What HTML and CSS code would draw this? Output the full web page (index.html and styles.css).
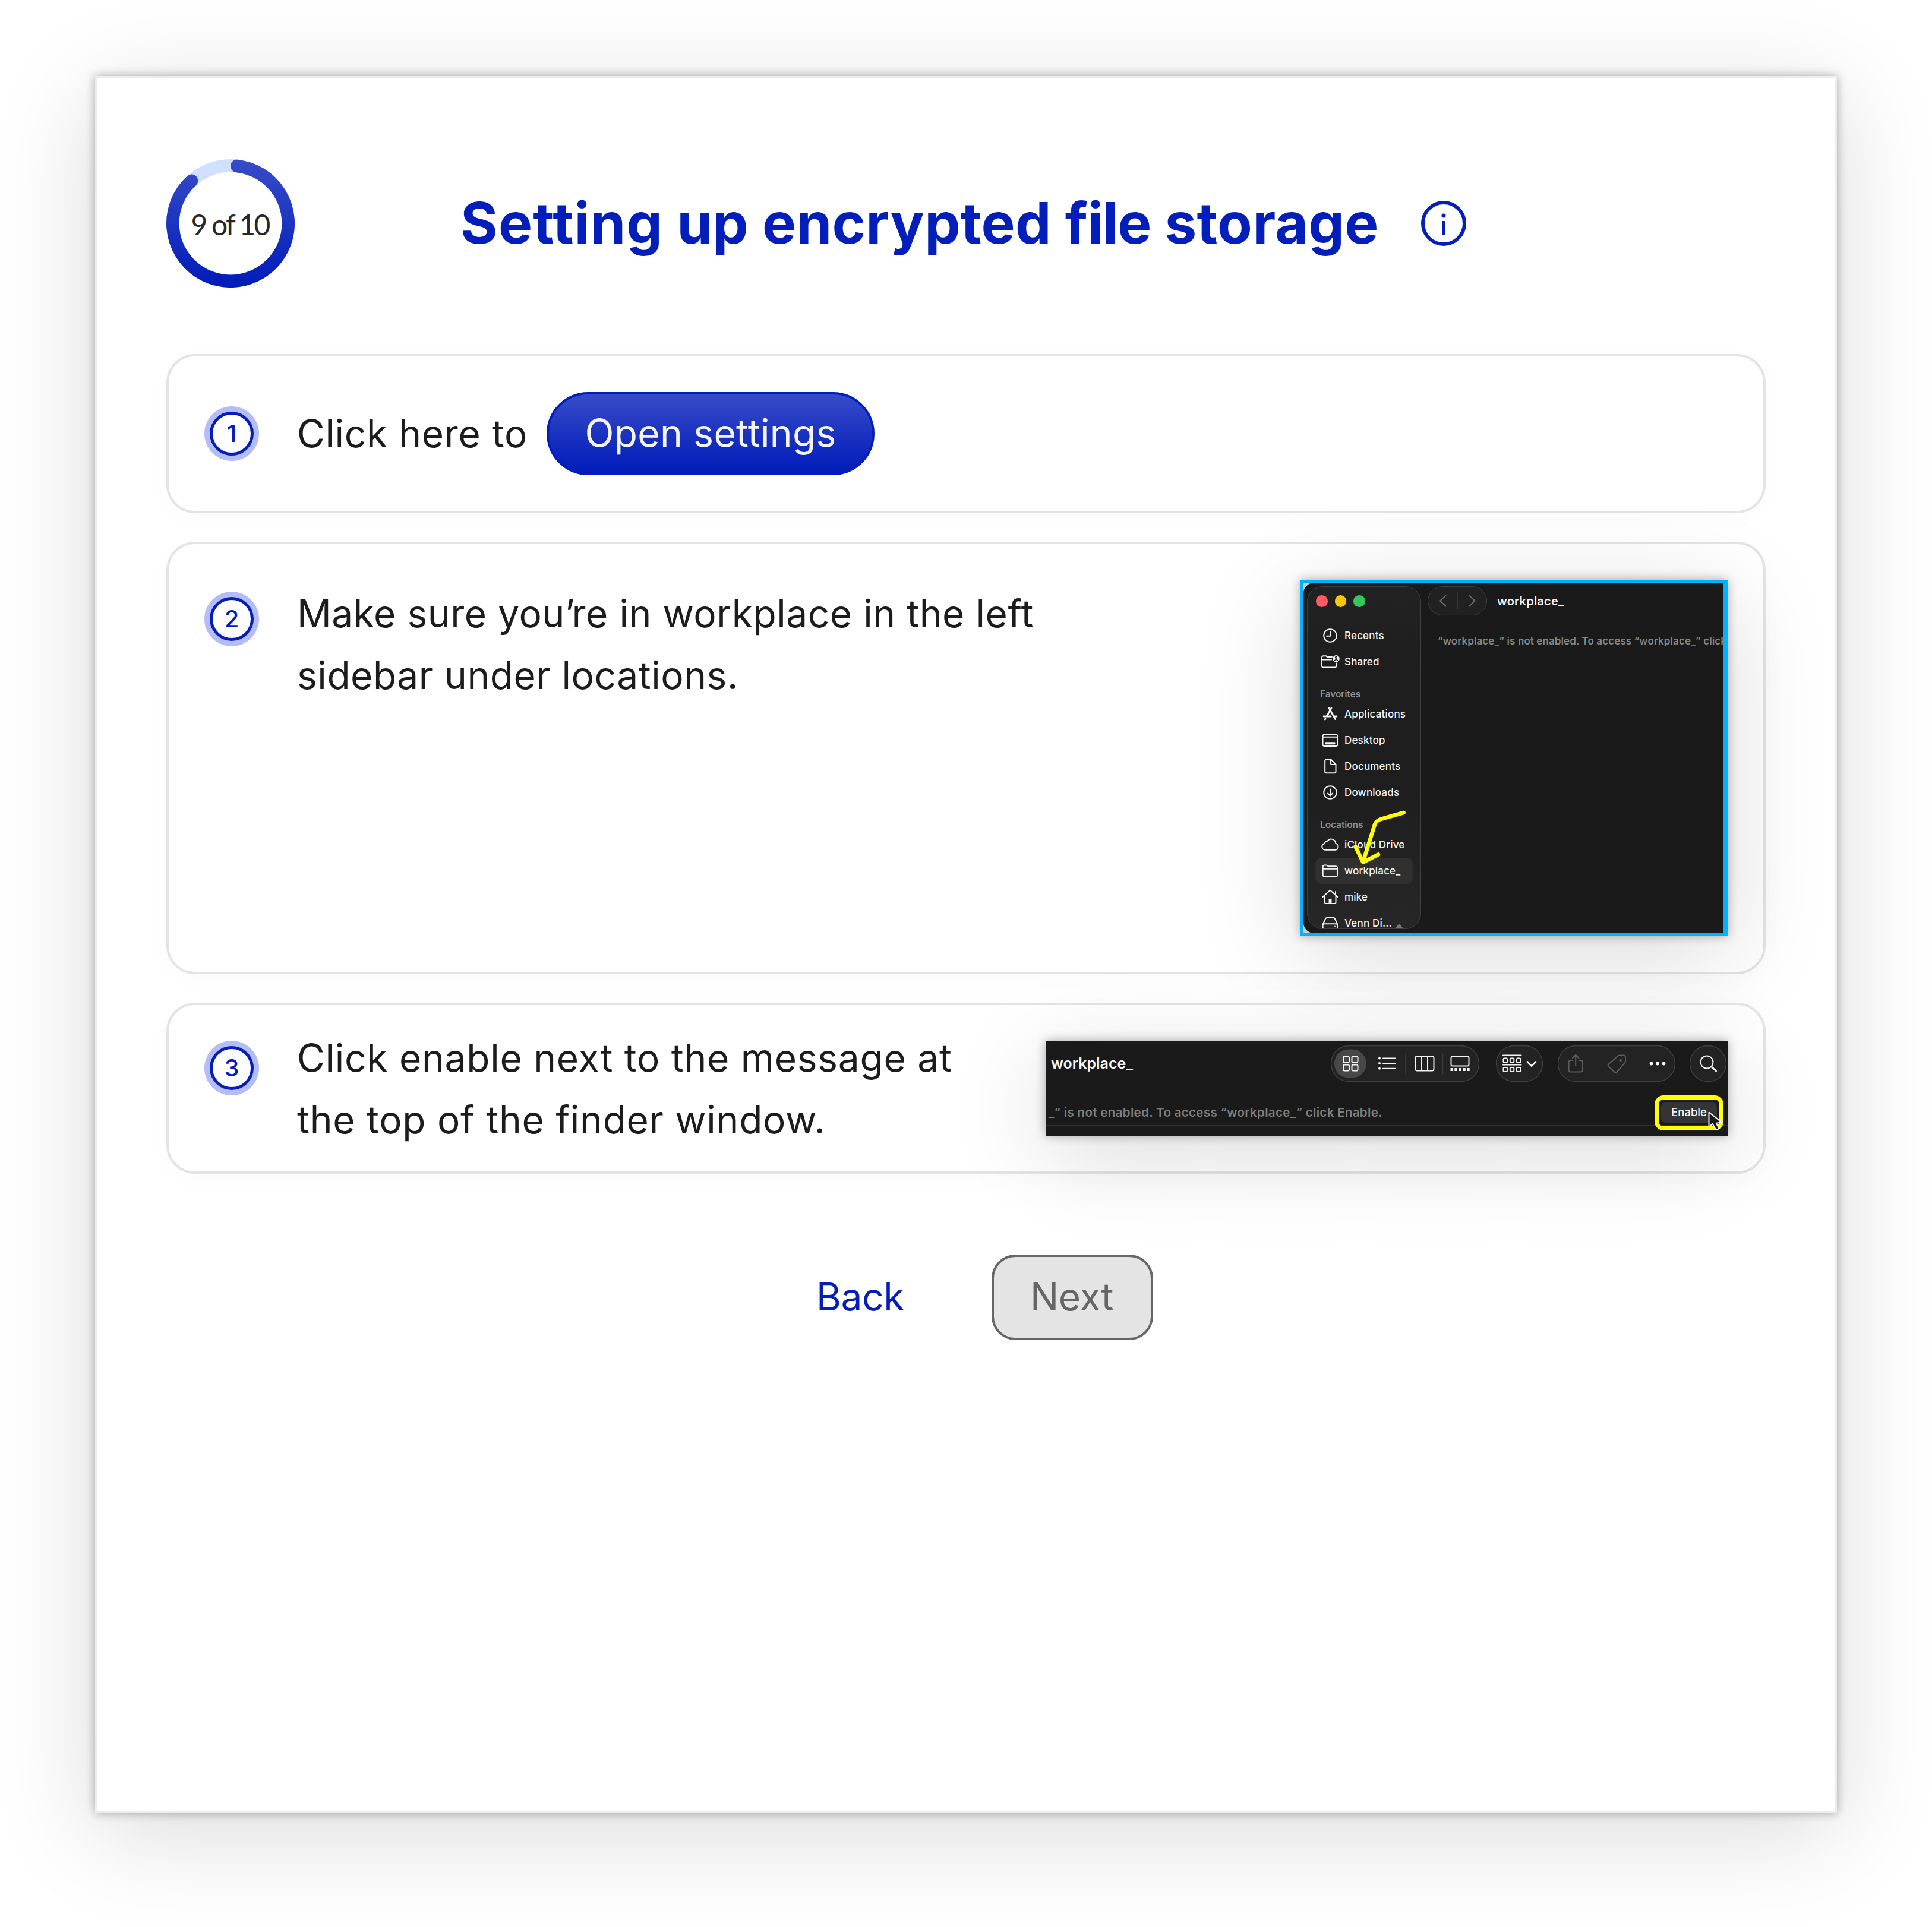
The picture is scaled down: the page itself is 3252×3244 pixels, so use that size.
FILE: index.html
```html
<!DOCTYPE html>
<html lang="en">
<head>
  <meta charset="UTF-8">
  <meta name="viewport" content="width=device-width, initial-scale=1.0">
  <title>Setting up encrypted file storage</title>
  <link rel="stylesheet" href="styles.css">
</head>
<body>
  <main class="dialog">
    <header class="header">
      <div class="progress">
        <svg viewBox="0 0 216 216" fill="none" stroke-width="21.6">
          <defs>
            <linearGradient id="ring" gradientUnits="userSpaceOnUse" x1="108" y1="0" x2="108" y2="216">
              <stop offset="0" stop-color="#384cc9"/>
              <stop offset="1" stop-color="#001bb9"/>
            </linearGradient>
          </defs>
          <circle cx="108" cy="108" r="97.2" stroke="#d0e1ff"/>
          <path d="M118.8 11.4A97.2 97.2 0 1 1 42.5 36.2" stroke="url(#ring)" stroke-linecap="round"/>
        </svg>
        <span class="progress-label">9 of 10</span>
      </div>
      <h1><span class="wide">Setting</span> up encrypted <span class="tight">file</span> storage</h1>
      <svg class="info" viewBox="0 0 76 76">
        <circle cx="38" cy="38" r="35" fill="none" stroke="#041ebb" stroke-width="6"/>
        <circle cx="38" cy="25" r="3.6" fill="#041ebb"/>
        <path d="M38 34v23" stroke="#041ebb" stroke-width="5.4"/>
      </svg>
    </header>

    <ol class="steps">
      <li class="step step-open">
        <span class="badge">1</span>
        <p>Click here to</p>
        <button class="btn-open">Open settings</button>
      </li>

      <li class="step step-sidebar">
        <span class="badge">2</span>
        <p>Make sure you<span class="quote">’</span>re in workplace in the left<br>sidebar under locations.</p>
        <div class="shot finder">
          <div class="window">
            <nav class="sidebar">
              <div class="lights"><i class="red"></i><i class="yellow"></i><i class="green"></i></div>
              <div class="item">
                <svg viewBox="-16 -16 32 32"><circle r="10.8"/><path d="M0-6.5V.8H-6"/></svg>
                Recents
              </div>
              <div class="item">
                <svg viewBox="-16 -16 32 32"><path d="M3-8H-5l-2-1.700h-4.500a2.500 2.500 0 0 0-2.500 2.500V7a2.500 2.500 0 0 0 2.500 2.500H8A2.500 2.500 0 0 0 10.500 7V2.500M-14-3.500H2"/><circle class="solid" cx="10" cy="-5.200" r="5.800"/><path class="cut" d="M10-8.500a1.400 1.400 0 0 1 0 2.800a1.400 1.400 0 0 1 0-2.800M7.300-2.200q2.700-2.600 5.400 0"/></svg>
                Shared
              </div>
              <div class="group">Favorites</div>
              <div class="item">
                <svg class="thick" viewBox="-16 -16 32 32"><path d="M-2-10L8.500 8.500M2-10L-5.500 3.500M-8 8L-8.800 9.200M-11 4H1M6 4h5"/></svg>
                Applications
              </div>
              <div class="item">
                <svg viewBox="-16 -16 32 32"><rect x="-12.500" y="-9.500" width="25" height="19.500" rx="3"/><path d="M-12.500-5.300h25"/><rect class="solid" x="-8.500" y="3.200" width="17" height="4" rx="1"/></svg>
                Desktop
              </div>
              <div class="item">
                <svg viewBox="-16 -16 32 32"><path d="M1.500-11.300H-6.500A2.300 2.300 0 0 0-8.800-9V9A2.300 2.300 0 0 0-6.500 11.300H7.200A2.300 2.300 0 0 0 9.500 9V-3.200ZM1-11V-5a2 2 0 0 0 2 2H9"/></svg>
                Documents
              </div>
              <div class="item">
                <svg viewBox="-16 -16 32 32"><circle r="10.800"/><path d="M0-5.500V5M-4 1.500L0 5.500L4 1.500"/></svg>
                Downloads
              </div>
              <div class="group">Locations</div>
              <div class="item">
                <svg viewBox="-16 -16 32 32"><path d="M-8.500 8.800a5.400 5.400 0 0 1-.8-10.700a5 5 0 0 1 4.800-4.300A7.600 7.600 0 0 1 9.300-2.200A5.600 5.600 0 0 1 8.500 8.800Z"/></svg>
                iCloud Drive
              </div>
              <div class="item selected">
                <svg viewBox="-16 -16 32 32"><path d="M-9.800-9.500h4l2.400 1.800H9.500a2.800 2.800 0 0 1 2.800 2.800V7a2.800 2.800 0 0 1-2.800 2.800H-9.500A2.800 2.800 0 0 1-12.300 7V-7a2.500 2.500 0 0 1 2.500-2.500ZM-12-3.300H12"/></svg>
                workplace_
              </div>
              <div class="item">
                <svg viewBox="-16 -16 32 32"><path d="M-12.500 0L-1-10.400Q0-11.300 1-10.400L12.500 0M-9-2.500V9a2 2 0 0 0 2 2H7.500a2 2 0 0 0 2-2V-2.500M9-9v5"/><path class="solid" d="M-2.500 3.500h5V11h-5z"/></svg>
                mike
              </div>
              <div class="item">
                <svg viewBox="-16 -16 32 32"><path d="M-12.400 2L-8-7.200A3 3 0 0 1-5.200-9H5.200A3 3 0 0 1 8-7.200L12.400 2M-9.500 1.300H9.500A3 3 0 0 1 12.500 4.300V6.500A3 3 0 0 1 9.500 9.500H-9.500A3 3 0 0 1-12.500 6.500V4.300A3 3 0 0 1-9.500 1.300Z"/><circle class="solid" cx="8" cy="5.400" r=".8"/></svg>
                Venn Di...
              </div>
              <span class="eject"></span>
            </nav>
            <div class="content">
              <div class="titlebar">
                <svg class="nav" viewBox="0 0 100 49"><rect x=".500" y=".500" width="99" height="48" rx="24"/><path class="sep" d="M50 11v27"/><path class="chev" d="M30.500 15.500L21 24.500l9.500 9M70 15.500l9.500 9l-9.500 9"/></svg>
                <b>workplace_</b>
              </div>
              <div class="notice">“workplace_” is not enabled. To access “workplace_” click</div>
            </div>
            <svg class="arrow" viewBox="0 0 104 100"><path d="M92.700 10L54 21Q46 24 44 30L24.300 93M11.700 67.500L24.300 93.500L50 80.500"/></svg>
          </div>
        </div>
      </li>

      <li class="step step-enable">
        <span class="badge">3</span>
        <p>Click enable next to the message at<br>the top of the finder window.</p>
        <div class="shot strip">
          <div class="strip-bar">
            <b>workplace_</b>
            <svg class="views" viewBox="0 0 250 61">
              <rect class="pill" x=".500" y=".500" width="249" height="60" rx="30"/>
              <rect class="on" x="6" y="6.500" width="54" height="48" rx="24"/>
              <path d="M23 18.500h6a2 2 0 0 1 2 2v6a2 2 0 0 1-2 2h-6a2 2 0 0 1-2-2v-6a2 2 0 0 1 2-2zM37.500 18.500h6a2 2 0 0 1 2 2v6a2 2 0 0 1-2 2h-6a2 2 0 0 1-2-2v-6a2 2 0 0 1 2-2zM23 32.500h6a2 2 0 0 1 2 2v6a2 2 0 0 1-2 2h-6a2 2 0 0 1-2-2v-6a2 2 0 0 1 2-2zM37.500 32.500h6a2 2 0 0 1 2 2v6a2 2 0 0 1-2 2h-6a2 2 0 0 1-2-2v-6a2 2 0 0 1 2-2z"/>
              <path d="M88 21.500h20.500M88 30h20.500M88 38.700h20.500"/>
              <g class="solid"><circle cx="82" cy="21.500" r="2"/><circle cx="82" cy="30" r="2"/><circle cx="82" cy="38.700" r="2"/></g>
              <path class="sep" d="M126 14v34M188.500 14v34"/>
              <path d="M145.500 18h25a3 3 0 0 1 3 3v18.500a3 3 0 0 1-3 3h-25a3 3 0 0 1-3-3V21a3 3 0 0 1 3-3zM153 18v24.500M163 18v24.500"/>
              <rect x="202.500" y="18.500" width="30" height="16" rx="2.500"/>
              <path class="dash" d="M201.500 40.500h32.500"/>
            </svg>
            <svg class="grouping" viewBox="0 0 79 61">
              <rect class="pill" x=".500" y=".500" width="78" height="60" rx="30"/>
              <path d="M12 16.500h30.500M12 32.500h30.500"/>
              <g><rect x="12.500" y="21.500" width="6.500" height="7" rx="1.500"/><rect x="23.800" y="21.500" width="6.500" height="7" rx="1.500"/><rect x="35" y="21.500" width="6.500" height="7" rx="1.500"/><rect x="12.500" y="37" width="6.500" height="7" rx="1.500"/><rect x="23.800" y="37" width="6.500" height="7" rx="1.500"/><rect x="35" y="37" width="6.500" height="7" rx="1.500"/></g>
              <path class="bold" d="M53 27.500l7 7l7-7"/>
            </svg>
            <svg class="actions" viewBox="0 0 198 61">
              <rect class="pill" x=".500" y=".500" width="197" height="60" rx="30"/>
              <g class="off"><path d="M25 25h-3.500a3 3 0 0 0-3 3v13.500a3 3 0 0 0 3 3h17.500a3 3 0 0 0 3-3V28a3 3 0 0 0-3-3H35.500M30.200 34V16M25 21l5.200-5.200l5.200 5.200"/><path d="M104 16.500h6.500a3.500 3.500 0 0 1 3.500 3.500v6.500a4 4 0 0 1-1.200 2.700L99.500 45a2.500 2.500 0 0 1-3.500 0l-10.500-10a2.500 2.500 0 0 1 0-3.500L101.300 17.600a4 4 0 0 1 2.700-1.100z"/><circle cx="105.700" cy="25" r="1.200"/></g>
              <g class="solid"><circle cx="157.500" cy="30.500" r="2.900"/><circle cx="168" cy="30.500" r="2.900"/><circle cx="178.500" cy="30.500" r="2.900"/></g>
            </svg>
            <svg class="search" viewBox="0 0 62 61">
              <rect class="pill" x=".500" y=".500" width="61" height="60" rx="30"/>
              <circle cx="29" cy="28" r="10.500"/><path class="bold" d="M37 36l7.500 7"/>
            </svg>
          </div>
          <div class="strip-row">
            <div class="strip-notice">_” is not enabled. To access “workplace_” click Enable.</div>
            <div class="enable">Enable
              <svg class="cursor" viewBox="0 0 30 34"><path d="M1.500 1.500V26.500L7.500 20.700L12.300 29.300Q15.500 31.500 18.500 28.500L13.700 19.700L23.500 18.600Z"/></svg>
            </div>
          </div>
        </div>
      </li>
    </ol>

    <footer class="actions-bar">
      <button class="btn-back">Back</button>
      <button class="btn-next" disabled>Next</button>
    </footer>
  </main>
</body>
</html>
```
FILE: styles.css
```css
* {
  box-sizing: border-box;
}

body {
  margin: 0;
  padding: 128px 160px 192px;
  background: #fff;
  color: #1c1c1c;
  font-family: Inter, "Liberation Sans", sans-serif;
  font-size: 64px;
  overflow: hidden;
}

h1, p, ol {
  margin: 0;
  padding: 0;
}

button {
  font: inherit;
  line-height: 1;
  border: 4px solid transparent;
}

.dialog {
  height: 2924px;
  padding: 136px 116px;
  background: #fff;
  border: 4px solid #ededed;
  box-shadow: 0 0 16px rgba(0, 0, 0, 0.32), 0 32px 160px rgba(0, 0, 0, 0.15);
}

/* header */

.header {
  display: flex;
  align-items: center;
  height: 216px;
}

.progress {
  display: grid;
  place-items: center;
  width: 216px;
  height: 216px;
}

.progress > * {
  grid-area: 1 / 1;
}

.progress svg {
  width: 216px;
  height: 216px;
}

.progress-label {
  margin: 3px 2px 0 0;
  font: 48px/1 Lato, sans-serif;
  letter-spacing: -2.85px;
  color: #282828;
}

h1 {
  margin: 0 0 3px 279px;
  font-size: 96px;
  font-weight: 700;
  letter-spacing: 0.28px;
  line-height: 1;
  color: #041ebb;
  white-space: nowrap;
}

h1 .wide {
  letter-spacing: 1.1px;
}

h1 .tight {
  letter-spacing: -0.9px;
}

.info {
  width: 76px;
  height: 76px;
  margin-left: 71px;
}

/* steps */

.steps {
  display: flex;
  flex-direction: column;
  gap: 48px;
  margin-top: 112px;
  list-style: none;
}

.step {
  display: flex;
  align-items: flex-start;
  padding: 60px;
  border: 4px solid #e4e4e4;
  border-radius: 48px;
  box-shadow: 0 8px 40px rgba(0, 0, 0, 0.02);
}

.step p {
  margin-left: 64px;
  line-height: 104px;
  white-space: nowrap;
}

.step-open {
  height: 268px;
  align-items: center;
}

.step-open p {
  letter-spacing: 0.65px;
}

.step-sidebar {
  height: 728px;
}

.step-sidebar p {
  margin-top: 5px;
  letter-spacing: 0.55px;
}

.step-sidebar .quote {
  letter-spacing: -5px;
}

.step-enable {
  height: 288px;
}

.step-enable p {
  margin-top: -23px;
  letter-spacing: 0.75px;
}

.badge {
  display: flex;
  flex: none;
  align-items: center;
  justify-content: center;
  width: 74px;
  height: 74px;
  margin: 9px;
  border: 5px solid #041ebb;
  border-radius: 50%;
  background: #fff;
  box-shadow: 0 0 0 9px #b4bdf7;
  color: #041ebb;
  font-size: 40px;
  font-weight: 500;
  line-height: 1;
}

.step-sidebar .badge {
  margin-top: 29px;
}

.btn-open {
  width: 552px;
  height: 140px;
  margin-left: 32px;
  padding: 0 0 2px;
  border-color: #041ebb;
  border-radius: 70px;
  background: linear-gradient(#374bc9, #001bb9);
  color: #f4f4f4;
  letter-spacing: 0.31px;
}

/* screenshots */

.shot {
  flex: none;
  margin-left: auto;
  box-shadow: 0 0 16px rgba(0, 0, 0, 0.32), 0 32px 160px rgba(0, 0, 0, 0.15);
  color: #f4f4f4;
}

.shot svg {
  flex: none;
  fill: none;
  stroke: #f4f4f4;
  stroke-width: 2;
  stroke-linecap: round;
  stroke-linejoin: round;
}

.shot svg .solid {
  fill: #f4f4f4;
  stroke: none;
}

.finder {
  width: 719px;
  height: 600px;
  border: 5px solid #00b2ff;
  border-right-width: 7px;
  background: #ccc;
  font-size: 17px;
}

.window {
  position: relative;
  display: flex;
  height: 590px;
  border-radius: 18px 0 0 18px;
  background: #1a1a1a;
  overflow: hidden;
}

.sidebar {
  position: relative;
  flex: none;
  width: 192px;
  height: 577px;
  margin: 6px 0 0 6px;
  border: 1px solid #404040;
  border-radius: 26px;
  background: linear-gradient(#222, #1e1e1e 25%, #1e1e1e 60%, #272727);
  overflow: hidden;
}

.lights {
  display: flex;
  gap: 12px;
  height: 60px;
  padding: 14px 0 0 14px;
}

.lights i {
  width: 19.6px;
  height: 19.6px;
  border-radius: 50%;
}

.red {
  background: #ff5b60;
}

.yellow {
  background: #f8c800;
}

.green {
  background: #34c759;
}

.item {
  display: flex;
  align-items: center;
  gap: 8px;
  height: 44px;
  margin: 0 13px;
  padding-left: 9px;
  border-radius: 10px;
  font-weight: 500;
  letter-spacing: 0.18px;
  white-space: nowrap;
}

.item svg {
  width: 32px;
  height: 32px;
}

.shot .thick {
  stroke-width: 2.8;
}

.shot .cut {
  stroke: #1e1e1e;
  stroke-width: 1.5;
}

.selected {
  background: #303030;
}

.group {
  height: 44px;
  padding: 22px 0 0 21px;
  color: #8f8f8f;
  font-size: 15.5px;
  font-weight: 600;
  letter-spacing: -0.1px;
  line-height: 22px;
}

.eject {
  position: absolute;
  right: 29px;
  bottom: 0;
  border: 7px solid transparent;
  border-top: 0;
  border-bottom: 8px solid #777;
}

.content {
  flex: 1;
  min-width: 0;
  padding: 6px 0 0 11px;
}

.titlebar {
  display: flex;
  align-items: center;
  gap: 17px;
  height: 49px;
  font-size: 20px;
  letter-spacing: 0.22px;
}

.shot b {
  font-weight: 600;
}

.nav {
  width: 100px;
  height: 49px;
}

.shot .nav rect {
  fill: #212121;
  stroke: #404040;
  stroke-width: 1;
}

.shot .sep {
  stroke: #3c3c3c;
  stroke-width: 1.5;
}

.shot .chev {
  stroke: #6a6a6a;
}

.notice {
  height: 38px;
  margin: 24px 0 0 3px;
  padding-left: 14px;
  border-bottom: 1px solid #3a3a3a;
  color: #858585;
  font-weight: 600;
  letter-spacing: 0.1px;
  line-height: 38px;
  white-space: nowrap;
  overflow: hidden;
}

.arrow {
  position: absolute;
  left: 76px;
  top: 377px;
  width: 104px;
  height: 100px;
}

.shot .arrow {
  stroke: #ff0;
  stroke-width: 6.6;
}

.strip {
  width: 1148px;
  height: 160px;
  border-top: 1px solid #0a8fd0;
  background: #1a1a1a;
}

.strip-bar {
  display: flex;
  align-items: center;
  height: 61px;
  margin-top: 7px;
  padding: 0 2px 0 9px;
  font-size: 25px;
}

.strip-bar b {
  flex: 1;
  margin-bottom: 1px;
}

.strip-bar svg {
  height: 61px;
}

.views {
  width: 250px;
  margin-right: 28px;
}

.grouping {
  width: 79px;
  margin-right: 25px;
}

.actions {
  width: 198px;
  margin-right: 24px;
}

.search {
  width: 62px;
}

.shot .pill {
  fill: #232323;
  stroke: #404040;
  stroke-width: 1.4;
}

.shot .on {
  fill: #484848;
  stroke: none;
}

.shot .off {
  stroke: #5c5c5c;
}

.shot .bold {
  stroke-width: 3;
}

.shot .dash {
  stroke-width: 5;
  stroke-linecap: butt;
  stroke-dasharray: 4.6 2.3;
}

.strip-row {
  display: flex;
  align-items: center;
  justify-content: space-between;
  height: 46px;
  margin-top: 29px;
  padding-right: 18px;
  border-bottom: 2px solid #313131;
}

.strip-notice {
  display: flex;
  justify-content: flex-end;
  width: 567px;
  color: #7f7f7f;
  font-size: 20.5px;
  font-weight: 600;
  letter-spacing: 0.33px;
  white-space: nowrap;
}

.enable {
  position: relative;
  width: 94px;
  height: 35px;
  margin-top: 1px;
  border-radius: 8px;
  background: #343434;
  font-size: 18.5px;
  font-weight: 500;
  line-height: 35px;
  text-align: center;
}

/* highlight around the Enable button */
.enable::before {
  content: "";
  position: absolute;
  inset: -11px -11px -13px;
  border: 7.5px solid #ff0;
  border-radius: 15px;
}

.cursor {
  position: absolute;
  left: 79px;
  top: 16px;
  width: 30px;
  height: 34px;
}

.shot .cursor {
  fill: #1a1a1a;
}

/* footer buttons */

.actions-bar {
  display: flex;
  justify-content: center;
  gap: 82px;
  margin-top: 136px;
}

.btn-back,
.btn-next {
  height: 144px;
  padding: 0 2px 2px 0;
  border-radius: 40px;
}

.btn-back {
  width: 276px;
  background: none;
  color: #041ebb;
  letter-spacing: -0.4px;
}

.btn-next {
  width: 272px;
  border-color: #666;
  background: #e4e4e4;
  color: #666;
  letter-spacing: -0.26px;
}
```
